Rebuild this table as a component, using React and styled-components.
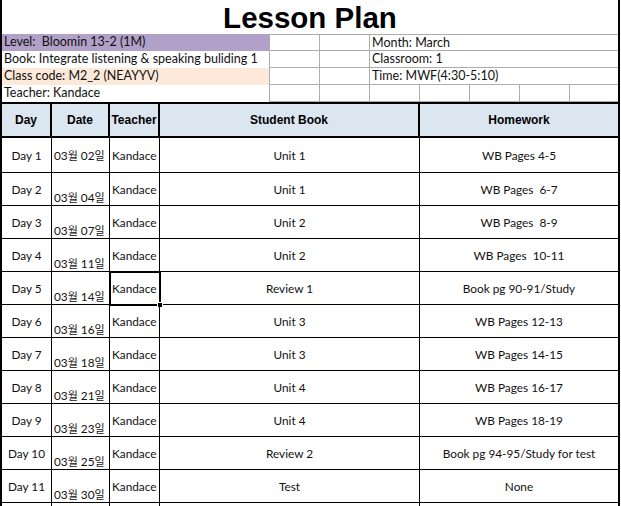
import React from 'react';
import styled, {createGlobalStyle} from 'styled-components';

const GlobalStyle = createGlobalStyle`
  html, body {
    margin:0;
    padding:0;
    background:#fff;
  }
  * {
    box-sizing:border-box;
  }
`

const grid = '#ADADAD'
const bodyFont = `Lato, 'Noto Sans CJK KR', sans-serif`

const Sheet = styled.div`
  width:620px;
  border-left:2px solid #000;
  border-right:2px solid #000;
  font-family:${bodyFont};
  font-size:12.5px;
  color:#111;
`

const Title = styled.div`
  height:34px;
  display:flex;
  align-items:center;
  justify-content:center;
  font-family:'Liberation Sans', Arial, sans-serif;
  font-weight:bold;
  font-size:29.5px;
  color:#000;
  padding-top:1px;
`

const InfoRow = styled.div`
  display:grid;
  grid-template-columns:${props => props.split ? '267px 50px 50px 50px 50px 50px 50px 1fr' : '267px 50px 50px 1fr'};
  height:17px;
`

const Label = styled.div`
  background:${props => props.bg || '#fff'};
  padding:0 0 0 2px;
  line-height:16px;
  white-space:pre;
  overflow:hidden;
`

const InfoCell = styled.div`
  border-left:1px solid ${grid};
  border-bottom:1px solid ${grid};
  border-top:${props => props.first ? `1px solid ${grid}` : 'none'};
  padding-left:2px;
  line-height:15px;
  white-space:pre;
`

const Row = styled.div`
  display:grid;
  grid-template-columns:50px 58px 50px 260px 1fr;
`

const HeadRow = styled(Row)`
  height:36px;
  background:#DCE6F1;
  border-top:2px solid #000;
  border-bottom:2px solid #000;
`

const HeadCell = styled.div`
  display:flex;
  align-items:center;
  justify-content:center;
  font-family:'Liberation Sans', Arial, sans-serif;
  font-weight:bold;
  font-size:12px;
  color:#000;
  border-right:${props => props.last ? 'none' : '2px solid #000'};
`

const BodyRow = styled(Row)`
  height:${props => props.tall ? '35px' : '33px'};
  border-bottom:1px solid #000;
  font-size:11.8px;
`

const Cell = styled.div`
  position:relative;
  display:flex;
  align-items:${props => props.bottom ? 'flex-end' : 'center'};
  justify-content:${props => props.left ? 'flex-start' : 'center'};
  padding-left:${props => props.left ? '2px' : '0'};
  border-right:${props => props.last ? 'none' : '1px solid #000'};
  white-space:pre;
  line-height:15px;
`

const Hangul = styled.span`
  font-family:'Noto Sans CJK KR', sans-serif;
  font-size:11px;
`

const Selection = styled.div`
  position:absolute;
  left:-1px;
  top:-1px;
  right:-2px;
  bottom:-2px;
  border:2px solid #000;
  pointer-events:none;
`

const Handle = styled.div`
  position:absolute;
  right:-4px;
  bottom:-4px;
  width:6px;
  height:6px;
  background:#000;
  border:1px solid #fff;
`

const lessons = [
  ['Day 1', '02', 'Unit 1', 'WB Pages 4-5'],
  ['Day 2', '04', 'Unit 1', 'WB Pages  6-7'],
  ['Day 3', '07', 'Unit 2', 'WB Pages  8-9'],
  ['Day 4', '11', 'Unit 2', 'WB Pages  10-11'],
  ['Day 5', '14', 'Review 1', 'Book pg 90-91/Study'],
  ['Day 6', '16', 'Unit 3', 'WB Pages 12-13'],
  ['Day 7', '18', 'Unit 3', 'WB Pages 14-15'],
  ['Day 8', '21', 'Unit 4', 'WB Pages 16-17'],
  ['Day 9', '23', 'Unit 4', 'WB Pages 18-19'],
  ['Day 10', '25', 'Review 2', 'Book pg 94-95/Study for test'],
  ['Day 11', '30', 'Test', 'None'],
]

// the cell that is selected in the sheet
const selected = 4

const App = () => {
  return (
    <Sheet>
      <GlobalStyle/>
      <Title>Lesson Plan</Title>

      <InfoRow>
        <Label bg='#B1A0C7'>Level:  Bloomin 13-2 (1M)</Label>
        <InfoCell first/>
        <InfoCell first/>
        <InfoCell first>Month: March</InfoCell>
      </InfoRow>
      <InfoRow>
        <Label>Book: Integrate listening &amp; speaking buliding 1</Label>
        <InfoCell/>
        <InfoCell/>
        <InfoCell>Classroom: 1</InfoCell>
      </InfoRow>
      <InfoRow>
        <Label bg='#FDE9D9'>Class code: M2_2 (NEAYYV)</Label>
        <InfoCell/>
        <InfoCell/>
        <InfoCell>Time: MWF(4:30-5:10)</InfoCell>
      </InfoRow>
      <InfoRow split>
        <Label>Teacher: Kandace</Label>
        <InfoCell/>
        <InfoCell/>
        <InfoCell/>
        <InfoCell/>
        <InfoCell/>
        <InfoCell/>
        <InfoCell/>
      </InfoRow>

      <HeadRow>
        <HeadCell>Day</HeadCell>
        <HeadCell>Date</HeadCell>
        <HeadCell>Teacher</HeadCell>
        <HeadCell>Student Book</HeadCell>
        <HeadCell last>Homework</HeadCell>
      </HeadRow>

      {lessons.map((item, index) => (
        <BodyRow key={index} tall={index === 0}>
          <Cell>{item[0]}</Cell>
          <Cell left bottom={index !== 0}>
            <span>03<Hangul>월</Hangul> {item[1]}<Hangul>일</Hangul></span>
          </Cell>
          <Cell left>
            Kandace
            {index === selected && <Selection><Handle/></Selection>}
          </Cell>
          <Cell>{item[2]}</Cell>
          <Cell last>{item[3]}</Cell>
        </BodyRow>
      ))}
      <BodyRow>
        <Cell/>
        <Cell/>
        <Cell/>
        <Cell/>
        <Cell last/>
      </BodyRow>
    </Sheet>
  )
}

export default App;
